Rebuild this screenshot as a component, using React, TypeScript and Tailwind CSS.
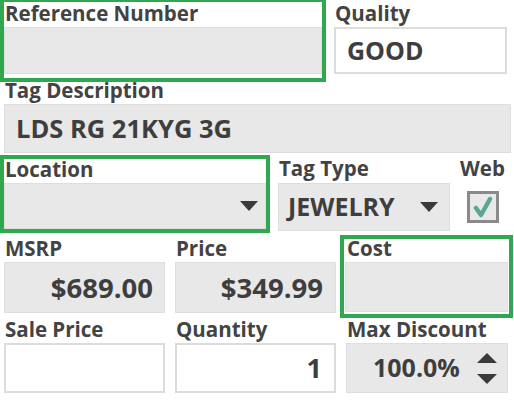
import React from "react";

const font = { fontFamily: '"Open Sans", "Noto Sans", sans-serif' };

function Label({ children, cls, lead }: { children: React.ReactNode; cls: string; lead?: string }) {
  return (
    <div className={`text-[20.5px] ${lead ?? "leading-[16px]"} font-bold text-[#434343] whitespace-nowrap ${cls}`}>
      {children}
    </div>
  );
}

function Arrow() {
  return (
    <svg width="18" height="10" viewBox="0 0 18 10">
      <polygon points="0,0 18,0 9,10" fill="#3a3a3a" />
    </svg>
  );
}

export default function App() {
  return (
    <div style={font} className="w-[514px] h-[401px] bg-white overflow-hidden flex flex-col text-[#3e3e3e]">
      {/* Row 1 */}
      <div className="flex items-start h-[82px]">
        <div className="w-[326px] h-[82px] border-x-4 border-b-4 border-t-2 border-[#2fa84f] pb-[4px] flex flex-col">
          <Label lead="leading-[18px]" cls="h-[25px] pt-[2px] pl-[1px]">Reference Number</Label>
          <div className="h-[47px] bg-[#e8e8e8] border border-[#dedede]" />
        </div>
        <div className="ml-[8px] w-[173px] flex flex-col">
          <Label lead="leading-[18px]" cls="h-[27px] pt-[4px] pl-[1px]">Quality</Label>
          <div className="h-[47px] bg-white border-2 border-[#dcdcdc] flex items-center pl-[11px] text-[25px] font-bold">
            GOOD
          </div>
        </div>
      </div>

      {/* Row 2 */}
      <div className="flex flex-col pl-[4px] w-[511px]">
        <Label cls="h-[22px] pl-[1px]">Tag Description</Label>
        <div className="h-[49px] bg-[#e8e8e8] border border-[#dedede] flex items-center pl-[11px] text-[25.5px] font-bold">
          LDS RG 21KYG 3G
        </div>
      </div>

      {/* Row 3 */}
      <div className="flex items-start mt-[2px] h-[78px]">
        <div className="w-[270px] h-[78px] border-4 border-[#2fa84f] flex flex-col">
          <Label cls="h-[24px] pt-[2px] pl-[1px]">Location</Label>
          <div className="h-[46px] bg-[#e8e8e8] border border-[#dedede] flex items-center justify-end pr-[7px]">
            <Arrow />
          </div>
        </div>
        <div className="ml-[8px] w-[172px] flex flex-col">
          <Label cls="h-[28px] pt-[5px] pl-[1px]">Tag Type</Label>
          <div className="h-[48px] bg-[#e8e8e8] border border-[#dedede] flex items-center pl-[9px] pr-[11px] justify-between">
            <span className="text-[25px] font-bold">JEWELRY</span>
            <Arrow />
          </div>
        </div>
        <div className="ml-[10px] w-[50px] flex flex-col">
          <Label cls="h-[36px] pt-[5px]">Web</Label>
          <div className="ml-[7px] w-[32px] h-[32px] border-[3px] border-[#8a8a8a] bg-[#e9e9e9] flex items-center justify-center">
            <svg width="22" height="22" viewBox="0 0 22 22">
              <path d="M4 12 L9 19 L18 3" stroke="#5fa596" strokeWidth="4.5" fill="none" strokeLinejoin="round" strokeLinecap="round" />
            </svg>
          </div>
        </div>
      </div>

      {/* Row 4 */}
      <div className="flex items-start mt-[2px] h-[83px]">
        <div className="ml-[4px] w-[161px] flex flex-col">
          <Label cls="h-[27px] pt-[5px] pl-[1px]">MSRP</Label>
          <div className="h-[51px] bg-[#e8e8e8] border border-[#dedede] flex items-center justify-end pr-[11px] text-[27.5px] font-bold">
            $689.00
          </div>
        </div>
        <div className="ml-[10px] w-[161px] flex flex-col">
          <Label cls="h-[27px] pt-[5px] pl-[1px]">Price</Label>
          <div className="h-[51px] bg-[#e8e8e8] border border-[#dedede] flex items-center justify-end pr-[12px] text-[27.5px] font-bold">
            $349.99
          </div>
        </div>
        <div className="ml-[4px] w-[173px] h-[83px] border-4 border-[#2fa84f] px-[1px] pb-[2px] flex flex-col">
          <Label cls="h-[23px] pt-[1px] pl-[2px]">Cost</Label>
          <div className="h-[50px] bg-[#e8e8e8] border border-[#dedede]" />
        </div>
      </div>

      {/* Row 5 */}
      <div className="flex items-start">
        <div className="ml-[4px] w-[161px] flex flex-col">
          <Label cls="h-[25px] pt-[3px] pl-[1px]">Sale Price</Label>
          <div className="h-[50px] bg-white border-2 border-[#dcdcdc]" />
        </div>
        <div className="ml-[10px] w-[161px] flex flex-col">
          <Label cls="h-[25px] pt-[3px] pl-[1px]">Quantity</Label>
          <div className="h-[50px] bg-white border-2 border-[#dcdcdc] flex items-center justify-end pr-[12px] text-[27px] font-bold">
            1
          </div>
        </div>
        <div className="ml-[10px] w-[162px] flex flex-col">
          <Label cls="h-[25px] pt-[3px] pl-[1px]">Max Discount</Label>
          <div className="h-[50px] bg-[#e8e8e8] border border-[#dedede] flex items-center pl-[26px] pr-[10px] justify-between">
            <span className="text-[25px] font-bold">100.0%</span>
            <div className="flex flex-col gap-[11px]">
              <svg width="20" height="10" viewBox="0 0 20 10">
                <polygon points="0,10 20,10 10,0" fill="#3a3a3a" />
              </svg>
              <svg width="20" height="10" viewBox="0 0 20 10">
                <polygon points="0,0 20,0 10,10" fill="#3a3a3a" />
              </svg>
            </div>
          </div>
        </div>
      </div>
    </div>
  );
}
